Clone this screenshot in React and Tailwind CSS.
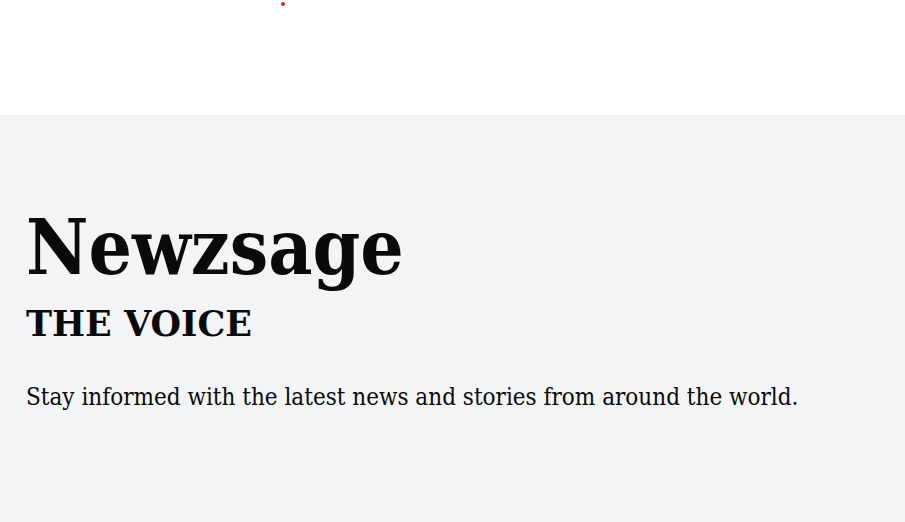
export default function App() {
  return (
    <div className="min-h-[522px] bg-white">
      {/* top bar */}
      <header className="relative h-[115px] bg-white">
        <span className="absolute left-[281px] top-[2px] h-[4px] w-[4px] rounded-full bg-[#e11d2e]" />
      </header>

      {/* hero */}
      <section className="bg-[#f3f4f6] px-[26px] pb-[110px] pt-[95px] text-[#0a0a0a]">
        <h1 className="font-['DejaVu_Serif_Condensed','DejaVu_Serif',serif] text-[76px] font-bold leading-none">
          Newzsage
        </h1>
        <h2 className="mt-[18px] font-['DejaVu_Serif',serif] text-[35px] font-bold leading-10">THE VOICE</h2>
        <p className="mt-[37px] font-['DejaVu_Serif_Condensed','DejaVu_Serif',serif] text-2xl leading-8">
          Stay informed with the latest news and stories from around the world.
        </p>
      </section>
    </div>
  );
}
